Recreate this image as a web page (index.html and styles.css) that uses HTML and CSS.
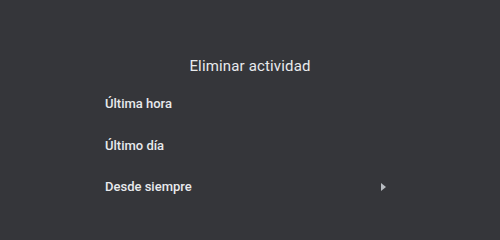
FILE: index.html
```html
<!DOCTYPE html>
<html lang="es">
<head>
<meta charset="utf-8">
<link rel="stylesheet" href="styles.css">
</head>
<body>
<div class="dialog">
  <h1 class="title">Eliminar actividad</h1>
  <ul class="menu">
    <li class="item">Última hora</li>
    <li class="item">Último día</li>
    <li class="item item-sub"><span>Desde siempre</span><span class="arrow"></span></li>
  </ul>
</div>
</body>
</html>
```
FILE: styles.css
```css
html, body {
  margin: 0;
  padding: 0;
  background: #35363a;
}
body {
  min-height: 213px;
}
.dialog {
  font-family: Roboto, "Noto Sans", sans-serif;
  color: #e8eaed;
  padding-top: 55px;
}
.title {
  margin: 0;
  font-size: 15px;
  font-weight: 400;
  text-align: center;
  line-height: 22px;
  letter-spacing: 0.15px;
}
.menu {
  list-style: none;
  margin: 6px 0 0;
  padding: 0 114px 0 105px;
}
.item {
  height: 41.5px;
  display: flex;
  align-items: center;
  justify-content: space-between;
  font-size: 13px;
  font-weight: 500;
  letter-spacing: 0;
}
.arrow {
  width: 0;
  height: 0;
  border-top: 4.5px solid transparent;
  border-bottom: 4.5px solid transparent;
  border-left: 5px solid #b8bcc1;
}
```
